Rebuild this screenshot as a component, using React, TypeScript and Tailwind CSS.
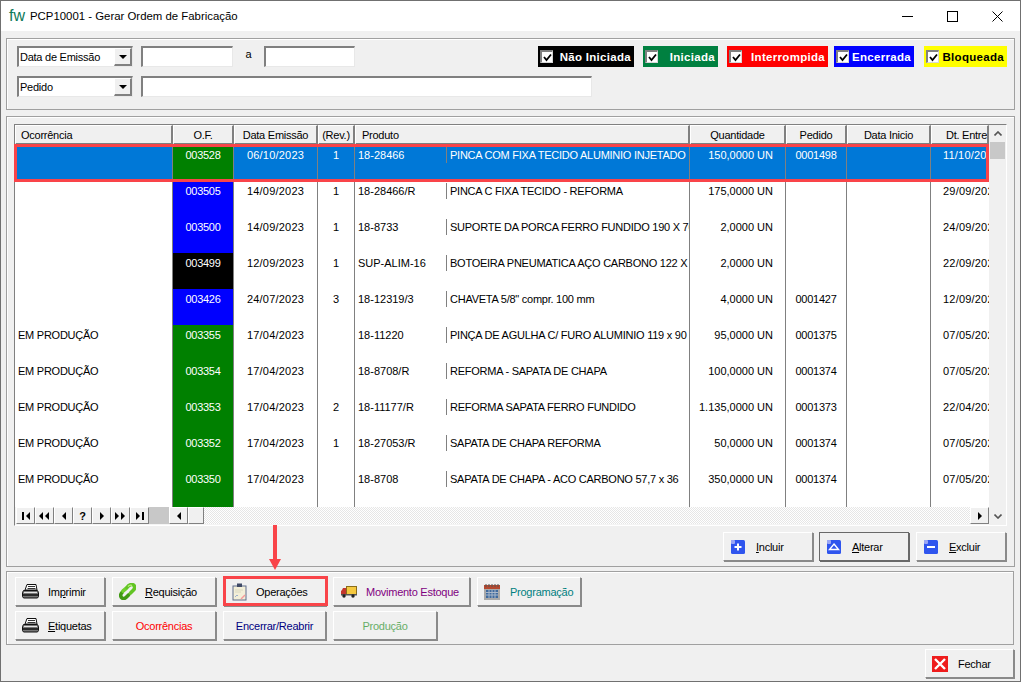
import React from "react";

const font = { fontFamily: '"Liberation Sans", Arial, sans-serif' };

const COLS = "grid grid-cols-[158px_61px_84px_37px_335px_96px_61px_84px_58px]";

const rows = [
  { oc: "", of: "003528", bg: "bg-[#008000]", em: "06/10/2023", rev: "1", cod: "18-28466", desc: "PINCA COM FIXA TECIDO ALUMINIO INJETADO", qtd: "150,0000", ped: "0001498", ent: "11/10/2023", sel: true },
  { oc: "", of: "003505", bg: "bg-[#0000ff]", em: "14/09/2023", rev: "1", cod: "18-28466/R", desc: "PINCA C FIXA TECIDO - REFORMA", qtd: "175,0000", ped: "", ent: "29/09/2023" },
  { oc: "", of: "003500", bg: "bg-[#0000ff]", em: "14/09/2023", rev: "1", cod: "18-8733", desc: "SUPORTE DA PORCA FERRO FUNDIDO 190 X 70", qtd: "2,0000", ped: "", ent: "24/09/2023" },
  { oc: "", of: "003499", bg: "bg-black", em: "12/09/2023", rev: "1", cod: "SUP-ALIM-16", desc: "BOTOEIRA PNEUMATICA AÇO CARBONO 122 X 70", qtd: "2,0000", ped: "", ent: "22/09/2023" },
  { oc: "", of: "003426", bg: "bg-[#0000ff]", em: "24/07/2023", rev: "3", cod: "18-12319/3", desc: 'CHAVETA 5/8" compr. 100 mm', qtd: "4,0000", ped: "0001427", ent: "12/09/2023" },
  { oc: "EM PRODUÇÃO", of: "003355", bg: "bg-[#008000]", em: "17/04/2023", rev: "", cod: "18-11220", desc: "PINÇA DE AGULHA C/ FURO ALUMINIO 119 x 90", qtd: "95,0000", ped: "0001375", ent: "07/05/2023" },
  { oc: "EM PRODUÇÃO", of: "003354", bg: "bg-[#008000]", em: "17/04/2023", rev: "", cod: "18-8708/R", desc: "REFORMA - SAPATA DE CHAPA", qtd: "100,0000", ped: "0001374", ent: "07/05/2023" },
  { oc: "EM PRODUÇÃO", of: "003353", bg: "bg-[#008000]", em: "17/04/2023", rev: "2", cod: "18-11177/R", desc: "REFORMA SAPATA FERRO FUNDIDO", qtd: "1.135,0000", ped: "0001373", ent: "22/04/2023" },
  { oc: "EM PRODUÇÃO", of: "003352", bg: "bg-[#008000]", em: "17/04/2023", rev: "1", cod: "18-27053/R", desc: "SAPATA DE CHAPA REFORMA", qtd: "50,0000", ped: "0001374", ent: "07/05/2023" },
  { oc: "EM PRODUÇÃO", of: "003350", bg: "bg-[#008000]", em: "17/04/2023", rev: "", cod: "18-8708", desc: "SAPATA DE CHAPA - ACO CARBONO 57,7 x 36", qtd: "350,0000", ped: "0001374", ent: "07/05/2023" },
  { oc: "", of: "", bg: "bg-[#008000]", em: "", rev: "", cod: "", desc: "", qtd: "", ped: "", ent: "" },
];

const legend = [
  { label: "Não Iniciada", cls: "w-[96px] bg-black text-white" },
  { label: "Iniciada", cls: "w-[75px] ml-[9px] bg-[#008040] text-white" },
  { label: "Interrompida", cls: "w-[101px] ml-[9px] bg-[#ff0000] text-white" },
  { label: "Encerrada", cls: "w-[80px] ml-[6px] bg-[#0000ff] text-white" },
  { label: "Bloqueada", cls: "w-[83px] ml-[10px] bg-[#ffff00] text-black" },
];

const headers = [
  { t: "Ocorrência", c: "pl-[5px] text-left" },
  { t: "O.F.", c: "text-center" },
  { t: "Data Emissão", c: "text-center" },
  { t: "(Rev.)", c: "text-center" },
  { t: "Produto", c: "pl-[6px] text-left" },
  { t: "Quantidade", c: "text-center" },
  { t: "Pedido", c: "text-center" },
  { t: "Data Inicio", c: "text-center" },
  { t: "Dt. Entrega", c: "pl-[14px] text-left" },
];

function Printer() {
  return (
    <svg width="17" height="15" viewBox="0 0 17 15">
      <path d="M5 .5h9l1 5.500H3z" fill="#fff" stroke="#111" />
      <path d="M6 2.500h7M5.500 4.500h8" stroke="#333" />
      <path d="M1.500 6.500h14l1 2v4l-1 1.500h-14l-1-1.500v-4z" fill="#777" stroke="#111" />
      <path d="M2 8.500h13" stroke="#e5e5e5" />
      <path d="M1 11h15" stroke="#111" strokeWidth="1.500" />
    </svg>
  );
}

function Chain() {
  return (
    <svg width="17" height="17" viewBox="0 0 17 17">
      <path d="M3 9.500c-2 2-1.500 4.500 0 5.500s3 .5 4.500-1l2-2" fill="none" stroke="#3f9a12" strokeWidth="3.600" strokeLinecap="round" />
      <path d="M4 8l3-2.500" fill="none" stroke="#6fd02c" strokeWidth="3.600" strokeLinecap="round" />
      <path d="M8 4.500c2-3 5-3.500 6.500-2.500s1.500 3.500 0 5l-3 3" fill="none" stroke="#62c424" strokeWidth="3.600" strokeLinecap="round" />
      <path d="M9 3.500c1.500-1.500 3-1.500 4-1" fill="none" stroke="#b7ef7a" strokeWidth="1.200" />
    </svg>
  );
}

function Clipboard() {
  return (
    <svg width="15" height="18" viewBox="0 0 15 18" className="ml-[2px]">
      <rect x="0.500" y="2.500" width="14" height="15" fill="#5f6d8c" />
      <rect x="1.500" y="3.500" width="12" height="13" fill="#f3efd8" />
      <rect x="5" y="0.500" width="5" height="3.500" fill="#3f4a66" />
      <path d="M3 7h8M3 9h6" stroke="#d9d8c0" />
      <path d="M3 14l2-2 1 1" stroke="#9db0cc" fill="none" />
      <path d="M9 16l4-4" stroke="#f59a9a" strokeWidth="1.500" />
    </svg>
  );
}

function Truck() {
  return (
    <svg width="16" height="12" viewBox="0 0 16 12" className="ml-[1px]">
      <rect x="5.500" y="0.500" width="10" height="8" fill="#f5c93f" stroke="#8a6d1a" />
      <path d="M1 4l1-2h3v7H0V5z" fill="#c2372e" />
      <rect x="0" y="8" width="16" height="1.500" fill="#555" />
      <circle cx="3" cy="10" r="1.700" fill="#222" />
      <circle cx="12" cy="10" r="1.700" fill="#222" />
    </svg>
  );
}

function Calendar() {
  return (
    <svg width="16" height="16" viewBox="0 0 16 16">
      <rect x="0" y="1" width="16" height="15" fill="#a9a9a9" />
      <rect x="0" y="1" width="16" height="4" fill="#b5482f" />
      <path d="M2 0v3M5 0v3M8 0v3M11 0v3M14 0v3" stroke="#555" />
      <path d="M2 6h12v8H2z" fill="#3f6a9e" />
      <path d="M2 8.500h12M2 11h12M5 6v8M8 6v8M11 6v8" stroke="#a9b7c9" />
    </svg>
  );
}

function BlueIcon({ kind }: { kind: "plus" | "up" | "minus" }) {
  return (
    <svg width="14" height="14" viewBox="0 0 14 14" className="ml-[1px]">
      <rect x="0" y="0" width="14" height="14" rx="1.500" fill="#2f55ee" />
      <rect x="0" y="0" width="4" height="4" rx="1" fill="#9aa6f5" />
      {kind === "plus" && <path d="M7 3.500v7M3.500 7h7" stroke="#fff" strokeWidth="2" />}
      {kind === "minus" && <path d="M3 7h8" stroke="#fff" strokeWidth="2" />}
      {kind === "up" && <path d="M7 4l4.500 5.500h-9z" fill="none" stroke="#fff" strokeWidth="1.400" />}
    </svg>
  );
}

function RedX() {
  return (
    <svg width="16" height="16" viewBox="0 0 16 16">
      <rect x="0" y="0" width="16" height="16" fill="#ee1c1c" />
      <path d="M3 3l10 10M13 3L3 13" stroke="#fff" strokeWidth="2.400" />
    </svg>
  );
}

function Btn({
  w,
  icon,
  color = "text-black",
  center,
  strong,
  children,
}: {
  w: string;
  icon?: React.ReactNode;
  color?: string;
  center?: boolean;
  strong?: boolean;
  children: React.ReactNode;
}) {
  return (
    <div
      className={`${w} h-[29px] flex items-center shrink-0 bg-[#f0f0f0] ${color} border border-t-white border-l-white ${
        strong
          ? "outline outline-[#696969] -outline-offset-1 border-r-[#696969] border-b-[#696969] shadow-[1px_1px_0_#696969]"
          : "border-r-[#8a8a8a] border-b-[#8a8a8a] shadow-[1px_1px_0_#8a8a8a]"
      } ${center ? "justify-center" : ""}`}
    >
      {icon && <div className="w-[32px] pl-[6px] flex items-center shrink-0">{icon}</div>}
      <span className="whitespace-nowrap">{children}</span>
    </div>
  );
}

function Select({ value }: { value: string }) {
  return (
    <div className="w-[116px] h-[21px] flex items-center bg-white border-t-2 border-l-2 border-r border-b border-t-[#808080] border-l-[#808080] border-r-[#e8e8e8] border-b-[#e8e8e8] shrink-0">
      <span className="flex-1 pl-[1px]">{value}</span>
      <div className="w-[18px] h-[18px] flex items-center justify-center bg-[#f0f0f0] border-r-2 border-b-2 border-[#808080] border-t border-l border-t-white border-l-white">
        <svg width="8" height="4" viewBox="0 0 8 4">
          <path d="M0 0h8L4 4z" fill="#000" />
        </svg>
      </div>
    </div>
  );
}

function Input({ w }: { w: string }) {
  return <div className={`${w} h-[21px] bg-white border-t-2 border-l-2 border-r border-b border-t-[#808080] border-l-[#808080] border-r-[#e8e8e8] border-b-[#e8e8e8] shrink-0`} />;
}

function NavBtn({ children }: { children: React.ReactNode }) {
  return (
    <div className="w-[19px] h-[17px] flex items-center justify-center bg-[#f0f0f0] border border-t-white border-l-white border-r-[#808080] border-b-[#808080] text-[11px] font-bold shrink-0">
      {children}
    </div>
  );
}

function Tri({ left, bar, double }: { left?: boolean; bar?: boolean; double?: boolean }) {
  const tri = left ? "M4 0v8L0 4z" : "M0 0v8l4-4z";
  return (
    <svg width={double ? 11 : 8} height="8" viewBox={double ? "0 0 11 8" : "0 0 8 8"}>
      {!double && !bar && <path d={tri} transform="translate(2 0)" />}
      {double && (
        <>
          <path d={tri} transform="translate(0 0)" />
          <path d={tri} transform="translate(6 0)" />
        </>
      )}
      {bar && left && (
        <>
          <rect x="0" y="0" width="2" height="8" />
          <path d={tri} transform="translate(4 0)" />
        </>
      )}
      {bar && !left && (
        <>
          <path d={tri} />
          <rect x="6" y="0" width="2" height="8" />
        </>
      )}
    </svg>
  );
}

export default function App() {
  return (
    <div style={font} className="relative w-[1021px] h-[682px] flex flex-col overflow-hidden bg-[#f0f0f0] text-black border border-[#707070] text-[11px] tracking-[-0.25px] leading-[16px]">
      {/* title bar */}
      <div className="h-[30px] shrink-0 flex items-center bg-white pl-[8px] tracking-normal">
        <span className="w-[21px] text-[16px] text-[#0f7a5a]">fw</span>
        <span className="text-[11.400px]">PCP10001 - Gerar Ordem de Fabricação</span>
        <div className="ml-auto flex items-center pr-[17px] gap-[34px]">
          <svg width="11" height="11" viewBox="0 0 11 11">
            <path d="M0 5.500h11" stroke="#000" />
          </svg>
          <svg width="11" height="11" viewBox="0 0 11 11">
            <rect x="0.500" y="0.500" width="10" height="10" fill="none" stroke="#000" />
          </svg>
          <svg width="11" height="11" viewBox="0 0 11 11">
            <path d="M0.500 0.500l10 10M10.500 0.500l-10 10" stroke="#000" />
          </svg>
        </div>
      </div>

      {/* filters */}
      <div className="ml-[5px] mt-[7px] w-[1009px] h-[72px] shrink-0 border border-[#a0a0a0] shadow-[inset_1px_1px_0_#fff] pl-[10px] pt-[7px] pr-[7px]">
        <div className="flex items-center">
          <Select value="Data de Emissão" />
          <Input w="w-[92px] ml-[8px]" />
          <span className="w-[31px] text-center -mt-[6px]">a</span>
          <Input w="w-[91px]" />
          <div className="ml-auto flex">
            {legend.map((l) => (
              <div key={l.label} className={`${l.cls} h-[21px] flex items-center justify-between pl-[2px] pr-[3px] font-bold text-[11.500px] tracking-[0.3px]`}>
                <div className="w-[13px] h-[13px] flex items-center justify-center bg-white border-t-2 border-l-2 border-r border-b border-t-[#808080] border-l-[#808080] border-r-[#d8d8d8] border-b-[#d8d8d8] shrink-0">
                  <svg width="9" height="9" viewBox="0 0 9 9">
                    <path d="M1 4l2.500 3L8 1.500" fill="none" stroke="#000" strokeWidth="1.800" />
                  </svg>
                </div>
                <span className="whitespace-nowrap">{l.label}</span>
              </div>
            ))}
          </div>
        </div>
        <div className="flex items-center mt-[9px]">
          <Select value="Pedido" />
          <Input w="w-[451px] ml-[8px]" />
        </div>
      </div>

      {/* grid panel */}
      <div className="ml-[5px] mt-[6px] w-[1009px] h-[451px] shrink-0 border border-[#a0a0a0] shadow-[inset_1px_1px_0_#fff] pl-[7px] pt-[7px]">
        <div className="w-[993px] h-[402px] flex border border-t-[#808080] border-l-[#808080] border-r-white border-b-white">
          <div className="w-[974px] flex flex-col shrink-0">
            <div className={`${COLS} h-[20px]`}>
              {headers.map((h) => (
                <div key={h.t} className={`${h.c} overflow-hidden whitespace-nowrap bg-[#f0f0f0] border-t border-l border-t-white border-l-white border-r-2 border-b-2 border-r-[#808080] border-b-[#808080] leading-[18px]`}>
                  {h.t}
                </div>
              ))}
            </div>
            <div className="h-[362px] overflow-hidden bg-white">
              {rows.map((r, i) => {
                const cell = `h-[36px] pt-[2px] overflow-hidden whitespace-nowrap border-r border-r-[#808080] ${r.sel ? "bg-[#0078d7] text-white" : ""}`;
                return (
                  <div key={i} className={COLS}>
                    <div className={`${cell} pl-[3px]`}>{r.oc}</div>
                    <div className={`h-[36px] pt-[2px] text-center text-white border-r border-r-[#808080] ${r.bg}`}>{r.of}</div>
                    <div className={`${cell} text-center tracking-[0.2px]`}>{r.em}</div>
                    <div className={`${cell} text-center`}>{r.rev}</div>
                    <div className={`${cell} flex items-start`}>
                      <span className="w-[92px] h-[16px] pl-[3px] border-r border-r-[#808080] shrink-0 tracking-normal">{r.cod}</span>
                      <span className="pl-[3px]">{r.desc}</span>
                    </div>
                    <div className={`${cell} text-right pr-[12px] tracking-normal`}>{r.qtd && `${r.qtd} UN`}</div>
                    <div className={`${cell} text-center`}>{r.ped}</div>
                    <div className={cell} />
                    <div className={`h-[36px] pt-[2px] pl-[12px] overflow-hidden whitespace-nowrap tracking-[0.2px] ${r.sel ? "bg-[#0078d7] text-white" : ""}`}>{r.ent}</div>
                  </div>
                );
              })}
            </div>
            {/* navigator + horizontal scrollbar */}
            <div className="h-[18px] flex bg-[#f4f4f4]">
              <div className="flex ml-[1px]">
                <NavBtn><Tri left bar /></NavBtn>
                <NavBtn><Tri left double /></NavBtn>
                <NavBtn><Tri left /></NavBtn>
                <NavBtn>?</NavBtn>
                <NavBtn><Tri /></NavBtn>
                <NavBtn><Tri double /></NavBtn>
                <NavBtn><Tri bar /></NavBtn>
              </div>
              <div className="w-[20px] h-[17px] bg-[#c8c8c8] shrink-0" />
              <NavBtn><Tri left /></NavBtn>
              <div className="w-[16px] h-[17px] bg-[#f0f0f0] border border-t-white border-l-white border-r-[#808080] border-b-[#808080] shrink-0" />
              <div className="flex-1 h-[17px] bg-[repeating-conic-gradient(#e6e6e6_0_25%,#fff_0_50%)] bg-[length:2px_2px]" />
              <NavBtn><Tri /></NavBtn>
            </div>
          </div>
          {/* vertical scrollbar */}
          <div className="w-[17px] flex flex-col items-center">
            <div className="h-[17px] flex items-center justify-center">
              <svg width="8" height="5" viewBox="0 0 8 5">
                <path d="M0.500 4.500L4 1l3.500 3.500" fill="none" stroke="#555" strokeWidth="1.600" />
              </svg>
            </div>
            <div className="w-[15px] h-[17px] bg-[#c8c8c8]" />
            <div className="mt-auto h-[18px] flex items-center justify-center">
              <svg width="8" height="5" viewBox="0 0 8 5">
                <path d="M0.500 0.500L4 4l3.500-3.500" fill="none" stroke="#555" strokeWidth="1.600" />
              </svg>
            </div>
          </div>
        </div>
        <div className="flex justify-end gap-[6px] pr-[8px] mt-[6px]">
          <Btn w="w-[90px]" icon={<BlueIcon kind="plus" />}><u>I</u>ncluir</Btn>
          <Btn w="w-[90px]" strong icon={<BlueIcon kind="up" />}><u>A</u>lterar</Btn>
          <Btn w="w-[90px] ml-[1px]" icon={<BlueIcon kind="minus" />}><u>E</u>xcluir</Btn>
        </div>
      </div>

      {/* actions panel */}
      <div className="ml-[5px] mt-[4px] w-[1008px] h-[74px] shrink-0 border border-[#a0a0a0] shadow-[inset_1px_1px_0_#fff] pl-[8px] pt-[5px]">
        <div className="flex gap-[7px]">
          <Btn w="w-[90px]" icon={<Printer />}>Im<u>p</u>rimir</Btn>
          <Btn w="w-[104px]" icon={<Chain />}><u>R</u>equisição</Btn>
          <Btn w="w-[103px]" icon={<Clipboard />}>Operações</Btn>
          <Btn w="w-[137px]" color="text-[#800080]" icon={<Truck />}>Movimento Estoque</Btn>
          <Btn w="w-[104px]" color="text-[#008080]" icon={<Calendar />}>Programação</Btn>
        </div>
        <div className="flex gap-[7px] mt-[5px]">
          <Btn w="w-[90px]" icon={<Printer />}><u>E</u>tiquetas</Btn>
          <Btn w="w-[104px]" color="text-[#ff0000]" center>Ocorrências</Btn>
          <Btn w="w-[103px]" color="text-[#000080]" center>Encerrar/Reabrir</Btn>
          <Btn w="w-[104px]" color="text-[#008000]/60" center>Produção</Btn>
        </div>
      </div>

      <div className="flex justify-end pr-[6px] mt-[4px]">
        <Btn w="w-[89px]" icon={<RedX />}>Fechar</Btn>
      </div>

      {/* annotations drawn over the screenshot */}
      <div className="absolute left-[13px] top-[143px] w-[975px] h-[38px] border-[3px] border-[#f94449]" />
      <div className="absolute left-[222px] top-[575px] w-[105px] h-[30px] border-[3px] border-[#f94449]" />
      <svg className="absolute left-[268px] top-[524px]" width="12" height="45" viewBox="0 0 12 45">
        <path d="M4 0h4v34h4L6 45 0 34h4z" fill="#f94449" />
      </svg>
    </div>
  );
}
